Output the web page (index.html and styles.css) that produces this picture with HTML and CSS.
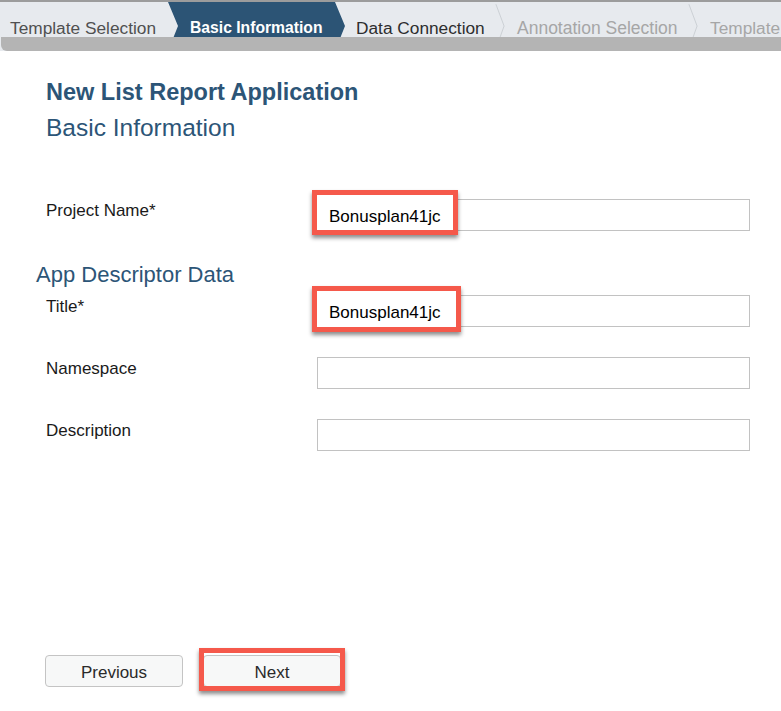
FILE: index.html
```html
<!DOCTYPE html>
<html lang="en">
<head>
<meta charset="utf-8">
<title>New List Report Application</title>
<link rel="stylesheet" href="styles.css">
</head>
<body>
<header class="wizard">
  <nav class="steps">
    <div class="step step-done step-w1">Template Selection</div>
    <div class="step step-active">Basic Information</div>
    <div class="step step-next step-w3">Data Connection</div>
    <svg class="step-sep" width="11" height="49" viewBox="0 0 11 49"><polyline points="1,0 10,24 1,49" fill="none" stroke="#c9cdd2" stroke-width="1"/></svg>
    <div class="step step-disabled step-w4">Annotation Selection</div>
    <svg class="step-sep" width="11" height="49" viewBox="0 0 11 49"><polyline points="1,0 10,24 1,49" fill="none" stroke="#c9cdd2" stroke-width="1"/></svg>
    <div class="step step-disabled step-w5">Template</div>
  </nav>
  <div class="scrollbar"></div>
</header>

<main class="page">
  <h1 class="app-title">New List Report Application</h1>
  <h2 class="step-title">Basic Information</h2>

  <div class="field field-first">
    <label class="field-label">Project Name*</label>
    <div class="field-control">
      <input class="text-input" type="text">
      <div class="callout callout-project">Bonusplan41jc</div>
    </div>
  </div>

  <h3 class="section-title">App Descriptor Data</h3>

  <div class="field field-tight">
    <label class="field-label">Title*</label>
    <div class="field-control">
      <input class="text-input" type="text">
      <div class="callout callout-title">Bonusplan41jc</div>
    </div>
  </div>

  <div class="field">
    <label class="field-label">Namespace</label>
    <div class="field-control">
      <input class="text-input" type="text">
    </div>
  </div>

  <div class="field">
    <label class="field-label">Description</label>
    <div class="field-control">
      <input class="text-input" type="text">
    </div>
  </div>

  <div class="actions">
    <button class="btn" type="button">Previous</button>
    <span class="highlight"><button class="btn" type="button">Next</button></span>
  </div>
</main>
</body>
</html>
```

FILE: styles.css
```css
html, body {
  margin: 0;
  background: #ffffff;
}

body {
  font-family: "Liberation Sans", Arial, sans-serif;
  color: #1c1c1c;
}

/* ---------- wizard step bar ---------- */
.wizard {
  position: relative;
  height: 49px;
  border-top: 2px solid #9c9c9c;
  background: #e7eaee;
  overflow: hidden;
}

.steps {
  display: flex;
  align-items: center;
  height: 49px;
  box-sizing: border-box;
  padding-top: 3px;
  white-space: nowrap;
  font-size: 17.3px;
  line-height: 20px;
}

.step {
  flex: none;
  box-sizing: border-box;
}

.step-w1 {
  width: 168px;
  padding-left: 10px;
}

.step-active {
  align-self: stretch;
  display: flex;
  align-items: center;
  width: 177px;
  margin-top: -3px;
  padding: 3px 0 0 22px;
  background: #2c5475;
  color: #ffffff;
  font-weight: bold;
  font-size: 15.7px;
  clip-path: polygon(0 0, calc(100% - 10px) 0, 100% 24px, calc(100% - 10px) 49px, 0 49px, 10px 24px);
}

.step-w3 {
  width: 150px;
  padding-left: 11px;
}

.step-w4 {
  width: 183px;
  padding-left: 12px;
  font-size: 17.5px;
}

.step-w5 {
  padding-left: 12px;
}

.step-done {
  color: #505050;
}

.step-next {
  color: #2e2e2e;
}

.step-disabled {
  color: #a6a6a6;
}

.step-sep {
  flex: none;
  align-self: flex-start;
  margin-top: -3px;
  width: 10px;
}

.scrollbar {
  position: absolute;
  left: 1px;
  right: 0;
  top: 35px;
  height: 14px;
  background: #b4b4b4;
  border-radius: 0 0 0 6px;
}

/* ---------- page ---------- */
.page {
  padding: 0 31px 24px 46px;
}

.app-title {
  margin: 28px 0 0;
  font-size: 23.5px;
  line-height: 26px;
  font-weight: bold;
  color: #2c5577;
}

.step-title {
  margin: 9px 0 0;
  font-size: 24.5px;
  line-height: 28px;
  font-weight: normal;
  color: #2c5577;
}

.section-title {
  margin: 32px 0 0 -10px;
  font-size: 22px;
  line-height: 24px;
  font-weight: normal;
  color: #2c5577;
}

.field {
  display: flex;
  align-items: flex-start;
  margin-top: 30px;
}

.field-first {
  margin-top: 57px;
}

.field-tight {
  margin-top: 8px;
}

.field-label {
  flex: none;
  width: 271px;
  padding-top: 2px;
  font-size: 17px;
  line-height: 20px;
  color: #1a1a1a;
}

.field-control {
  position: relative;
  flex: 1;
}

.text-input {
  display: block;
  width: 100%;
  height: 32px;
  box-sizing: border-box;
  margin: 0;
  padding: 0 12px;
  border: 1px solid #c2c2c2;
  border-radius: 0;
  background: #ffffff;
  font: 17px "Liberation Sans", Arial, sans-serif;
  color: #000;
  outline: none;
}

/* red annotation boxes */
.callout {
  position: absolute;
  left: -5px;
  top: -9px;
  box-sizing: border-box;
  padding: 12px 0 0 12px;
  border: 5px solid #f5594b;
  background: #ffffff;
  box-shadow: 0 3px 4px rgba(0, 0, 0, 0.45);
  font-size: 17px;
  line-height: 20px;
  color: #000;
  white-space: nowrap;
}

.callout-project {
  width: 146px;
  height: 45px;
}

.callout-title {
  width: 149px;
  height: 46px;
}

/* ---------- actions ---------- */
.actions {
  display: flex;
  gap: 20px;
  margin: 204px 0 0 -1px;
}

.btn {
  display: block;
  width: 138px;
  height: 32px;
  box-sizing: border-box;
  margin: 0;
  padding: 3px 0 0;
  border: 1px solid #c4c4c4;
  border-radius: 4px;
  background: #f7f8f8;
  font: 17px "Liberation Sans", Arial, sans-serif;
  color: #2a2a2a;
}

.highlight {
  position: relative;
  display: block;
}

.highlight::after {
  content: "";
  position: absolute;
  left: -4px;
  right: -4px;
  top: -7px;
  bottom: -4px;
  border: 5px solid #f5594b;
  box-shadow: 0 3px 4px rgba(0, 0, 0, 0.45);
  pointer-events: none;
}
```
